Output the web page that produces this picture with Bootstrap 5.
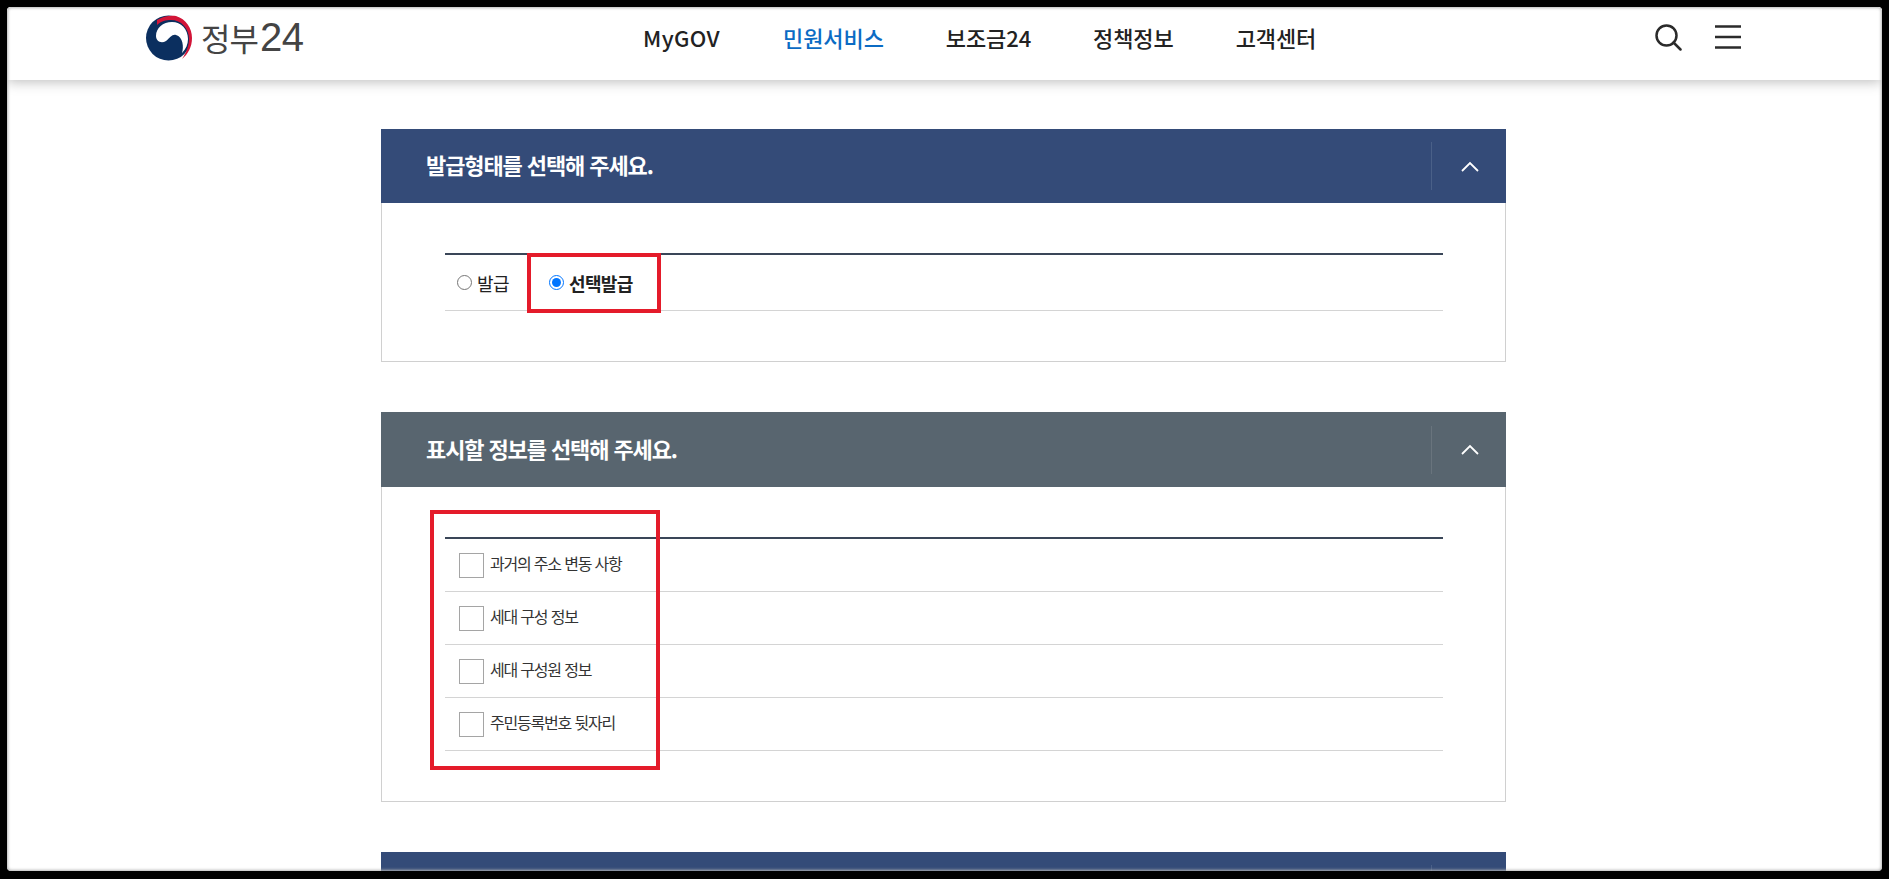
<!DOCTYPE html>
<html lang="ko">
<head>
<meta charset="utf-8">
<title>정부24</title>
<link href="https://cdn.jsdelivr.net/npm/bootstrap@5.3.0/dist/css/bootstrap.min.css" rel="stylesheet">
<style>
html,body{height:100%;}
body{background:#000;font-family:"Noto Sans CJK KR","Noto Sans",sans-serif;overflow:hidden;color:#222;}
.frame{position:absolute;left:7px;top:7px;width:1875px;height:864px;background:#fff;border-radius:4px;overflow:hidden;}
.frame-edge{position:absolute;inset:0;border-radius:4px;box-shadow:inset 0 0 3px 1px #b5b5b5;pointer-events:none;z-index:5;}
.topbar{height:73px;background:#fff;box-shadow:0 2px 12px rgba(0,0,0,.26);padding:0 141px 13px 138px;}
.logo-area{width:498px;}
.logo-text{font-size:32px;line-height:1;color:#444;letter-spacing:-1px;margin-left:8px;font-family:"Noto Sans CJK KR",sans-serif;}
.logo-num{font-family:"Liberation Sans",sans-serif;font-size:40px;letter-spacing:-.5px;margin-left:2px;}
.menu-item{font-size:22px;font-weight:500;color:#222;text-decoration:none;letter-spacing:-.1px;line-height:1;}
.menu-item.active-item{color:#0b6bc4;}
.menu-item.latin-item{letter-spacing:.4px;margin-right:1px;}
.menu-row{gap:62px;}
.tools{margin-left:auto;gap:33px;}
.content{width:1125px;margin-left:374px;padding-top:49px;}
.panel{margin-bottom:50px;border:1px solid #d0d0d0;border-top:0;}
.panel-head{height:74px;margin:0 -1px;padding-left:45px;color:#fff;font-size:22px;font-weight:700;letter-spacing:-1.1px;background:#344b78;}
.panel-head.tone-gray{background:#58656f;height:75px;}
.head-title{margin-bottom:3px;}
.head-tool{margin-left:auto;width:75px;height:48px;padding-left:2px;border-left:1px solid #4a6088;}
.tone-gray .head-tool{border-left-color:#69747d;}
.panel-body-a{padding:50px 62px 50px 63px;}
.panel-body-b{padding:50px 62px 50px 63px;}
.opt-table{position:relative;border-top:2px solid #3a4658;border-bottom:1px solid #d4d4d4;}
.opt-row{height:55px;padding-left:12px;font-size:18px;letter-spacing:-.6px;}
.opt-label{margin-top:2px;}
.opt-radio{width:15px;height:15px;border-radius:50%;border:1px solid #767676;background:#fff;margin-right:5px;flex:none;}
.opt-radio.on{border:1.5px solid #0075ff;padding:2px;background:#0075ff content-box;}
.opt-second{margin-left:40px;}
.check-row{height:53px;padding-left:14px;font-size:16px;letter-spacing:-1.2px;color:#333;border-bottom:1px solid #d4d4d4;}
.check-row:last-child{height:52px;border-bottom:0;}
.check-text{margin-bottom:5px;}
.check-box{width:25px;height:25px;border:1.5px solid #a5a5a5;background:#fff;margin-right:6px;flex:none;}
.red-mark{position:absolute;border:4px solid #e41b2a;pointer-events:none;}
.mark-a{left:82px;top:-2px;width:134px;height:60px;}
.mark-b{left:-15px;top:-29px;width:230px;height:260px;}
</style>
</head>
<body>
<div class="frame">
  <div class="frame-edge"></div>
  <header class="topbar d-flex align-items-center">
    <div class="logo-area d-flex align-items-center">
      <svg width="48" height="47" viewBox="0 0 48 47" aria-hidden="true">
        <circle cx="23.500" cy="24" r="22.500" fill="#0b2f5f"/>
        <path d="M11 22C11 14 18 8 27 8c9 0 16 7 16 17 0 5-2 10-6 14 2-6 1-16-6-18-4-1-6 3-10 6-5 3-10 0-10-5z" fill="#fff"/>
        <path d="M12 6C18 2 26 1 31 2c10 3 16 12 16 22 0 9-4 16-10 21 4-6 7-13 7-20C44 14 36 6 26 6c-5 0-10 1-14 5z" fill="#d21437"/>
      </svg>
      <span class="logo-text">정부<span class="logo-num">24</span></span>
    </div>
    <nav class="menu-row d-flex align-items-center">
      <a class="menu-item latin-item" href="#">MyGOV</a>
      <a class="menu-item active-item" href="#">민원서비스</a>
      <a class="menu-item" href="#">보조금24</a>
      <a class="menu-item" href="#">정책정보</a>
      <a class="menu-item" href="#">고객센터</a>
    </nav>
    <div class="tools d-flex align-items-center">
      <svg width="27" height="27" viewBox="0 0 27 27" fill="none" stroke="#2b2b2b" stroke-width="2.500" aria-hidden="true"><circle cx="11.500" cy="11.500" r="10"/><path d="M18.500 18.500l7 7" stroke-linecap="round"/></svg>
      <svg width="26" height="24" viewBox="0 0 26 24" fill="none" stroke="#2b2b2b" stroke-width="2.500" aria-hidden="true"><path d="M0 1.500h26M0 12h26M0 22.500h26"/></svg>
    </div>
  </header>
  <main class="content">
    <section class="panel">
      <div class="panel-head d-flex align-items-center">
        <span class="head-title">발급형태를 선택해 주세요.</span>
        <div class="head-tool d-flex align-items-center justify-content-center">
          <svg width="18" height="11" viewBox="0 0 18 11" fill="none" stroke="#fff" stroke-width="1.800" aria-hidden="true"><path d="M1 10l8-8 8 8"/></svg>
        </div>
      </div>
      <div class="panel-body-a">
        <div class="opt-table">
          <div class="opt-row d-flex align-items-center">
            <span class="opt-radio"></span><span class="opt-label">발급</span>
            <span class="opt-radio on opt-second"></span><span class="opt-label fw-bold">선택발급</span>
          </div>
          <div class="red-mark mark-a"></div>
        </div>
      </div>
    </section>
    <section class="panel">
      <div class="panel-head tone-gray d-flex align-items-center">
        <span class="head-title">표시할 정보를 선택해 주세요.</span>
        <div class="head-tool d-flex align-items-center justify-content-center">
          <svg width="18" height="11" viewBox="0 0 18 11" fill="none" stroke="#fff" stroke-width="1.800" aria-hidden="true"><path d="M1 10l8-8 8 8"/></svg>
        </div>
      </div>
      <div class="panel-body-b">
        <div class="opt-table">
          <div class="check-list">
            <div class="check-row d-flex align-items-center"><span class="check-box"></span><span class="check-text">과거의 주소 변동 사항</span></div>
            <div class="check-row d-flex align-items-center"><span class="check-box"></span><span class="check-text">세대 구성 정보</span></div>
            <div class="check-row d-flex align-items-center"><span class="check-box"></span><span class="check-text">세대 구성원 정보</span></div>
            <div class="check-row d-flex align-items-center"><span class="check-box"></span><span class="check-text">주민등록번호 뒷자리</span></div>
          </div>
          <div class="red-mark mark-b"></div>
        </div>
      </div>
    </section>
    <section class="panel">
      <div class="panel-head d-flex align-items-center">
        <div class="head-tool"></div>
      </div>
    </section>
  </main>
</div>
<script src="https://cdn.jsdelivr.net/npm/bootstrap@5.3.0/dist/js/bootstrap.bundle.min.js"></script>
</body>
</html>
